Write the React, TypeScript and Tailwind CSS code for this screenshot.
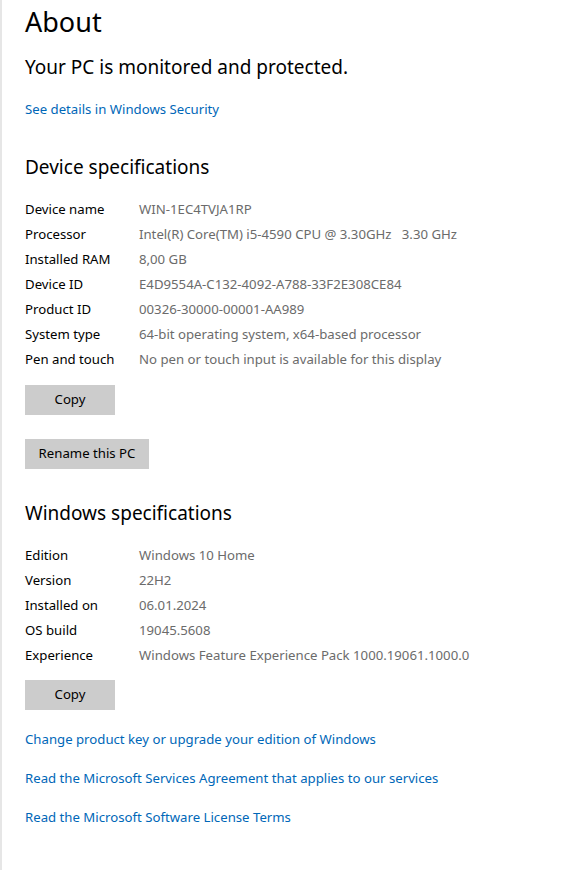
import React from 'react';

const device: [string, string][] = [
  ['Device name', 'WIN-1EC4TVJA1RP'],
  ['Processor', 'Intel(R) Core(TM) i5-4590 CPU @ 3.30GHz   3.30 GHz'],
  ['Installed RAM', '8,00 GB'],
  ['Device ID', 'E4D9554A-C132-4092-A788-33F2E308CE84'],
  ['Product ID', '00326-30000-00001-AA989'],
  ['System type', '64-bit operating system, x64-based processor'],
  ['Pen and touch', 'No pen or touch input is available for this display'],
];

const windows: [string, string][] = [
  ['Edition', 'Windows 10 Home'],
  ['Version', '22H2'],
  ['Installed on', '06.01.2024'],
  ['OS build', '19045.5608'],
  ['Experience', 'Windows Feature Experience Pack 1000.19061.1000.0'],
];

const SpecTable: React.FC<{ rows: [string, string][] }> = ({ rows }) => (
  <div className="flex flex-col">
    {rows.map(([label, value]) => (
      <div key={label} className="flex h-[25px] items-center text-[13.2px]">
        <span className="w-[114px] shrink-0 text-black">{label}</span>
        <span className="whitespace-pre text-[#6b6b6b]">{value}</span>
      </div>
    ))}
  </div>
);

const GrayButton: React.FC<{ label: string; wide?: boolean }> = ({ label, wide }) => (
  <button
    className={`h-[30px] bg-[#cccccc] text-[13.2px] text-black ${wide ? 'w-[124px]' : 'w-[90px]'}`}
  >
    {label}
  </button>
);

export default function App() {
  return (
    <div
      className="min-h-[870px] w-[578px] border-l-2 border-[#e6e6e6] bg-white pl-[23px]"
      style={{ fontFamily: '"Segoe UI", "Noto Sans", sans-serif' }}
    >
      <h1 className="pt-[2px] text-[27px] leading-[40px] text-black">About</h1>
      <h2 className="mt-[10px] text-[19px] leading-[30px] text-black">Your PC is monitored and protected.</h2>
      <a className="mt-[17px] block text-[13.2px] leading-[20px] text-[#0067b8]">See details in Windows Security</a>

      <h2 className="mt-[33px] text-[19px] leading-[30px] text-black">Device specifications</h2>
      <div className="mt-[15px]">
        <SpecTable rows={device} />
      </div>
      <div className="mt-[13px] flex flex-col items-start gap-[24px]">
        <GrayButton label="Copy" />
        <GrayButton label="Rename this PC" wide />
      </div>

      <h2 className="mt-[29px] text-[19px] leading-[30px] text-black">Windows specifications</h2>
      <div className="mt-[15px]">
        <SpecTable rows={windows} />
      </div>
      <div className="mt-[12px]">
        <GrayButton label="Copy" />
      </div>

      <div className="mt-[19px] flex flex-col gap-[19px] text-[13.2px] leading-[20px] text-[#0067b8]">
        <a>Change product key or upgrade your edition of Windows</a>
        <a>Read the Microsoft Services Agreement that applies to our services</a>
        <a>Read the Microsoft Software License Terms</a>
      </div>
    </div>
  );
}
